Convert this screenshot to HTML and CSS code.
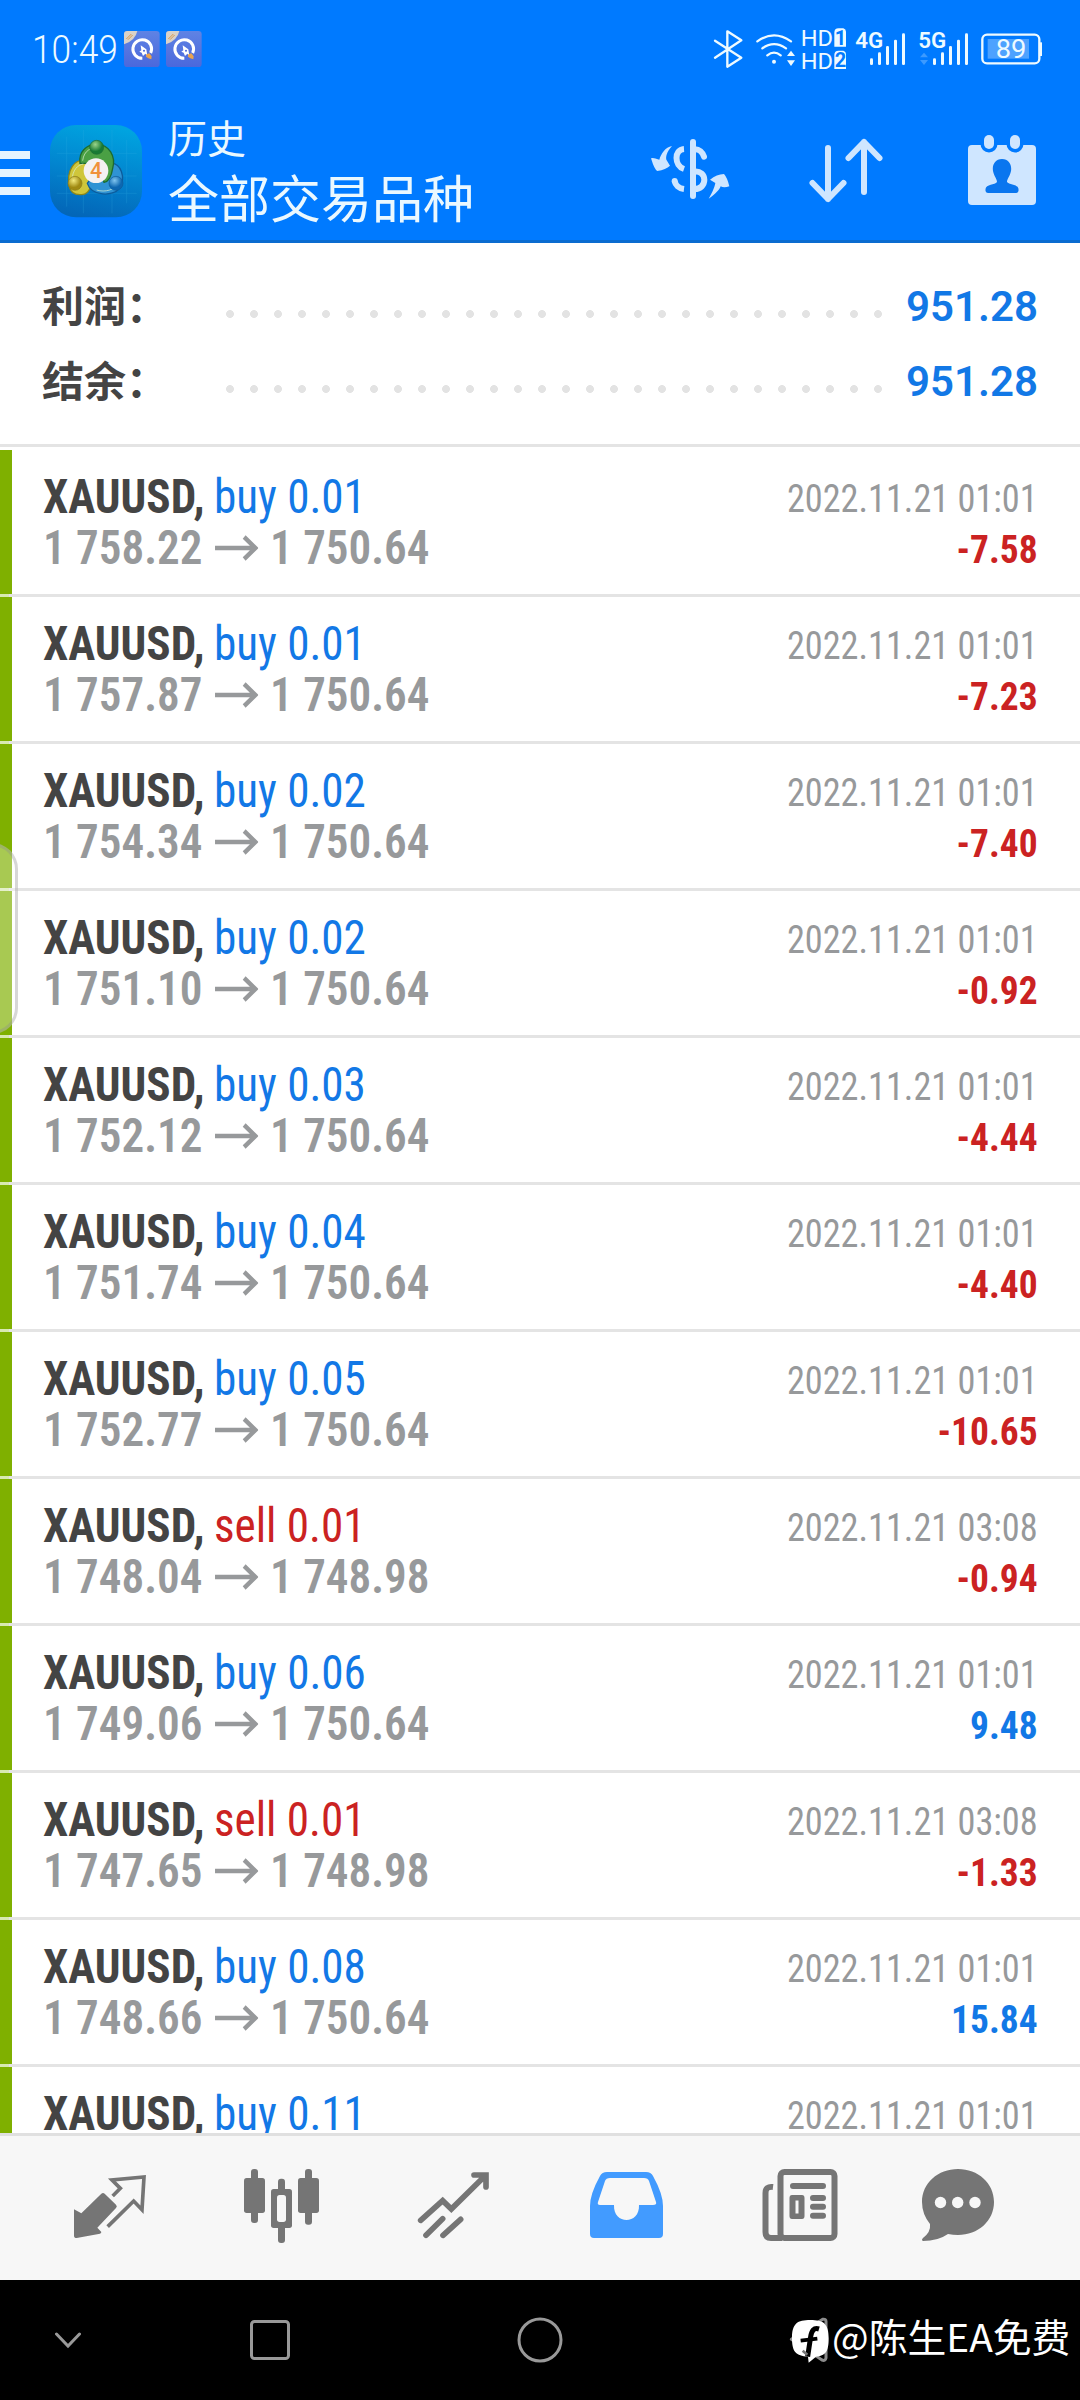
FILE: index.html
```html
<!DOCTYPE html>
<html lang="zh-CN">
<head>
<meta charset="utf-8">
<title>历史</title>
<link rel="stylesheet" href="styles.css">
</head>
<body>
<header class="header">
  <div class="status">
    <span class="clock">10:49</span>
    <svg class="app-chips" width="80" height="100" viewBox="0 0 240 300">
      <defs>
        <linearGradient id="chip" x1="0" y1="0" x2="0" y2="1"><stop offset="0" stop-color="#5f83e4"/><stop offset="1" stop-color="#4b68dc"/></linearGradient>
        <g id="notice">
          <rect x="0" y="93" width="107" height="108" rx="10" fill="url(#chip)"/>
          <path d="M0 133V103Q0 93 10 93H40Q34 122 0 133Z" fill="#d9d2c8"/>
          <path d="M7 117l15-15M12 119l14-14" stroke="#d99a4a" stroke-width="3"/>
          <path d="M55 175A28 28 0 1 1 80 159" fill="none" stroke="#fff" stroke-width="9"/>
          <path d="M50 136L67 148L70 167L64 161L57 168L53 158L46 155L52 151Z" fill="#fff"/>
          <circle cx="60" cy="152" r="3" fill="#4b68dc"/>
          <path d="M67 163l9-3 7 9-1 9-9-3-7-5Z" fill="#eaa44e"/>
        </g>
      </defs>
      <use href="#notice"/><use href="#notice" x="126"/>
    </svg>
    <svg class="indicators" width="360" height="60" viewBox="0 0 1080 180">
      <g fill="none" stroke="#eefaff" stroke-width="7" stroke-linecap="round" stroke-linejoin="round">
        <path d="M45 62L124 113L82 140V34L124 61L45 113"/>
        <path d="M172 64Q222 28 273 64M187 85Q222 60 258 85M202 106Q222 90 242 106"/>
        <rect x="847" y="44" width="171" height="86" rx="14"/>
      </g>
      <g fill="#eefaff">
        <circle cx="222" cy="125" r="6"/>
        <path d="M261 108H285L273 92ZM261 121H285L273 138Z"/>
        <path d="M403 38Q403 25 416 25H430Q438 27 438 35V80H403ZM403 105Q403 92 416 92H430Q438 94 438 102V147H403Z"/>
        <path d="M1018 67h8v41h-8z"/>
        <g><rect x="510" y="115" width="9" height="20" rx="4"/><rect x="534" y="97" width="9" height="38" rx="4"/><rect x="558" y="78" width="9" height="57" rx="4"/><rect x="582" y="59" width="9" height="76" rx="4"/><rect x="606" y="40" width="9" height="95" rx="4"/></g>
        <g><rect x="699" y="115" width="9" height="20" rx="4"/><rect x="723" y="97" width="9" height="38" rx="4"/><rect x="747" y="78" width="9" height="57" rx="4"/><rect x="771" y="59" width="9" height="76" rx="4"/><rect x="795" y="40" width="9" height="95" rx="4"/></g>
        <path d="M660 112H684L672 98ZM660 120H684L672 135Z" opacity=".25"/>
        <rect x="863" y="57" width="124" height="59" opacity=".32"/>
      </g>
      <g class="ind-text">
        <text x="302" y="79" font-size="68" textLength="97" lengthAdjust="spacingAndGlyphs">HD</text>
        <text x="302" y="146" font-size="68" textLength="97" lengthAdjust="spacingAndGlyphs">HD</text>
        <text class="net" x="466" y="83" font-size="66" textLength="84" lengthAdjust="spacingAndGlyphs">4G</text>
        <text class="net" x="655" y="83" font-size="66" textLength="84" lengthAdjust="spacingAndGlyphs">5G</text>
        <text x="887" y="115" font-size="80" textLength="92" lengthAdjust="spacingAndGlyphs">89</text>
        <text class="sim" x="404" y="75" font-size="60">1</text>
        <text class="sim" x="404" y="142" font-size="60">2</text>
      </g>
    </svg>
  </div>
  <div class="toolbar">
    <svg width="30" height="140" viewBox="0 100 30 140"><path d="M0 151H30V159H0ZM0 169H30V177H0ZM0 187H30V195H0Z" fill="#e6f4ff"/></svg>
    <svg class="logo" width="92" height="140" viewBox="60 240 276 420">
      <defs>
        <linearGradient id="tile" x1=".6" y1="0" x2=".4" y2="1"><stop offset="0" stop-color="#00a4e0"/><stop offset=".5" stop-color="#0285cf"/><stop offset="1" stop-color="#0366b8"/></linearGradient>
        <radialGradient id="gr" cx=".4" cy=".3"><stop offset="0" stop-color="#9bd48b"/><stop offset="1" stop-color="#187a33"/></radialGradient>
        <radialGradient id="ye" cx=".4" cy=".3"><stop offset="0" stop-color="#f3ea7c"/><stop offset="1" stop-color="#a08a12"/></radialGradient>
        <radialGradient id="bl" cx=".4" cy=".3"><stop offset="0" stop-color="#7fc4ee"/><stop offset="1" stop-color="#0d67b0"/></radialGradient>
      </defs>
      <rect x="60" y="315" width="276" height="277" rx="78" fill="url(#tile)"/>
      <path d="M110 350V560M160 330V580M246 330V580M290 360V550M80 400H320M80 520H320M80 468H320" stroke="#39b3e6" stroke-width="2" opacity=".3"/>
      <path d="M118 500C108 450 135 415 165 422C205 430 190 520 160 523C138 526 122 520 118 500Z" fill="#cfc63a" stroke="#8a861c" stroke-width="4"/>
      <path d="M172 490C185 530 250 530 268 505C290 470 270 430 245 430C215 440 190 460 172 490Z" fill="#2f93d4" stroke="#0c5c9c" stroke-width="4"/>
      <path d="M150 430C145 395 170 373 200 373C238 373 258 410 248 445C244 470 235 485 222 487L205 430Z" fill="#4aa044" stroke="#1c6b30" stroke-width="4"/>
      <path d="M158 422C162 390 185 382 205 382M126 480C128 450 142 435 160 432M200 510C225 518 255 510 266 488" fill="none" stroke="#d8f0d0" stroke-width="3" opacity=".7"/>
      <circle cx="200" cy="382" r="21" fill="url(#gr)" stroke="#1c6b30" stroke-width="2"/>
      <circle cx="135" cy="490" r="21" fill="url(#ye)" stroke="#8a7a1c" stroke-width="2"/>
      <circle cx="258" cy="490" r="21" fill="url(#bl)" stroke="#0c5c9c" stroke-width="2"/>
      <circle cx="198" cy="452" r="37" fill="#f4f1f2"/>
      <text class="logo-digit" x="198" y="475" text-anchor="middle" font-size="64">4</text>
    </svg>
    <div class="titles"><div class="sub">历史</div><div class="main">全部交易品种</div></div>
    <svg class="act-money" width="140" height="140" viewBox="0 -75 420 420">
      <g fill="none" stroke="#cfe6ff" stroke-width="18">
        <path d="M159 51V213" stroke-linecap="round"/>
        <path d="M132 72C102 74 102 122 132 132M104 168C106 180 116 190 132 192"/>
        <path d="M104 168V168M163 73C178 72 188 82 192 95" stroke-linecap="round"/>
        <path d="M160 140C204 132 204 196 160 192"/>
      </g>
      <path d="M96 63C80 80 76 98 80 106L90 122Q78 134 52 138Q44 136 33 100Q38 96 58 104C62 88 76 66 96 63Z" fill="#cfe6ff"/>
      <path d="M206 221C226 208 240 192 242 184Q252 190 268 184Q262 158 252 147Q230 148 210 164L226 174C224 188 214 208 206 221Z" fill="#cfe6ff"/>
    </svg>
    <svg class="act-sort" width="80" height="140" viewBox="806 100 80 140"><path d="M828 148V199M812.500 183L828 199L843.500 183M864 192V142M848.500 158L864 142L879.500 158" fill="none" stroke="#cfe6ff" stroke-width="6" stroke-linecap="round" stroke-linejoin="round"/></svg>
    <svg class="act-date" width="70" height="140" viewBox="967 100 70 140">
      <rect x="968" y="145" width="68" height="60" rx="4" fill="#cfe6ff"/>
      <rect x="984" y="135" width="10" height="14" rx="5" fill="#cfe6ff" stroke="#007aff" stroke-width="7" paint-order="stroke"/>
      <rect x="1010" y="135" width="10" height="14" rx="5" fill="#cfe6ff" stroke="#007aff" stroke-width="7" paint-order="stroke"/>
      <path d="M1002 159C1009 159 1012 165 1011 171C1010 176 1007 179 1007 182C1009 185 1018 184 1018.500 189V191Q1018 193 1016 193H988Q986 193 985.500 191V189C986 184 995 185 997 182C997 179 994 176 993 171C992 165 995 159 1002 159Z" fill="#0a76ef"/>
    </svg>
  </div>
</header>

<section class="summary">
  <div class="total"><span class="label">利润：</span><span class="dots"></span><span class="sum">951.28</span></div>
  <div class="total"><span class="label">结余：</span><span class="dots"></span><span class="sum">951.28</span></div>
</section>

<main class="deals" id="deals"></main>

<nav class="tabs">
  <svg class="t1" width="100" height="144" viewBox="0 -72 300 432">
    <path d="M42 148L64 160L124 101Q129 97 134 101L168 134Q173 139 168 144L112 203L124 216Q124 220 120 221L50 234Q42 234 42 227Z" fill="#757575"/>
    <path d="M158 108L181 85L156 60L252 51L246 149L221 123L143 200" fill="none" stroke="#757575" stroke-width="11"/>
  </svg>
  <svg class="t2" width="90" height="144" viewBox="540 -72 270 432" fill="#757575">
    <rect x="552" y="54" width="63" height="105" rx="8"/><rect x="573" y="27" width="21" height="162" rx="9"/>
    <rect x="714" y="54" width="63" height="105" rx="8"/><rect x="735" y="27" width="21" height="167" rx="9"/>
    <rect x="654" y="56" width="21" height="193" rx="9"/><rect x="633" y="87" width="63" height="117" rx="8"/><rect x="651" y="105" width="27" height="81" rx="8" fill="#f7f7f7"/>
  </svg>
  <svg class="t3" width="90" height="144" viewBox="1050 -72 270 432">
    <path d="M1082 181L1148 122L1174 147L1277 46M1242 45H1278V81" fill="none" stroke="#757575" stroke-width="17" stroke-linecap="round" stroke-linejoin="miter"/>
    <path d="M1098 226L1148 176M1149 226L1202 178" fill="none" stroke="#757575" stroke-width="17" stroke-linecap="round"/>
  </svg>
  <svg class="t4" width="74" height="144" viewBox="590 2136 74 144"><path fill-rule="evenodd" d="M607 2172H646Q651 2172 653 2176Q663 2194 663 2206V2234Q663 2238 659 2238H594Q590 2238 590 2234V2206Q590 2194 600 2176Q602 2172 607 2172ZM610 2178Q606 2178 605 2181L598 2202Q597 2205 600 2205H614C613 2225 640 2225 639 2205H653Q657 2205 656 2202L649 2181Q648 2178 644 2178Z" fill="#429bff"/></svg>
  <svg class="t5" width="76" height="144" viewBox="762 2136 76 144">
    <g fill="none" stroke="#757575" stroke-width="6"><rect x="780.500" y="2172" width="54" height="66" rx="4"/><path d="M773 2187Q765.500 2186 765.500 2193V2232Q765.500 2238 771 2238H782"/><path d="M793 2186H823M813 2198H823M813 2206.700H823M813 2215.700H823" stroke-linecap="round"/></g>
    <path fill-rule="evenodd" d="M792 2195H802Q804.500 2195 804.500 2198V2216Q804.500 2219 802 2219H792Q789.500 2219 789.500 2216V2198Q789.500 2195 792 2195ZM795.500 2200.500V2213.500H798.500V2200.500Z" fill="#757575"/>
  </svg>
  <svg class="t6" width="74" height="144" viewBox="921 2136 74 144"><path d="M958 2169C978 2169 994 2183 994 2202C994 2221 978 2235 958 2235Q953 2235 948 2234Q938 2241 923 2241Q921 2240 923 2238Q931 2232 930 2224Q922 2214 922 2202C922 2183 938 2169 958 2169Z" fill="#757575"/><g fill="#f7f7f7"><circle cx="940.500" cy="2202.500" r="5.700"/><circle cx="957.700" cy="2202.500" r="5.700"/><circle cx="975" cy="2202.500" r="5.700"/></g></svg>
</nav>

<footer class="sysbar">
  <svg class="k1" width="26" height="120" viewBox="55 2280 26 120"><path d="M56.500 2334L68 2346L79.500 2334" fill="none" stroke="#999" stroke-width="3" stroke-linecap="round"/></svg>
  <svg class="k2" width="40" height="120" viewBox="250 2280 40 120"><rect x="251.500" y="2321.500" width="37" height="37" rx="3" fill="none" stroke="#999" stroke-width="3"/></svg>
  <svg class="k3" width="46" height="120" viewBox="517 2280 46 120"><circle cx="540" cy="2340" r="21" fill="none" stroke="#999" stroke-width="3"/></svg>
  <svg class="k4" width="42" height="120" viewBox="24 -90 126 360">
    <path d="M34 88L128 28Q138 26 138 34V144Q136 154 126 150Z" fill="none" stroke="#8c8c8c" stroke-width="9" stroke-linejoin="round"/>
    <path d="M91 30C130 30 146 40 146 85C146 126 136 138 108 140L86 158L84 140C48 138 36 126 36 85C36 40 52 30 91 30Z" fill="#fff"/>
    <path d="M117 57C101 52 95 62 92 80L83 140" fill="none" stroke="#000" stroke-width="15"/>
    <path d="M62 92L112 86" fill="none" stroke="#000" stroke-width="11"/>
    <path d="M68 122L82 134" fill="none" stroke="#777" stroke-width="8"/>
  </svg>
  <span class="mark">@陈生EA免费</span>
</footer>
<div class="handle"></div>
<script src="app.js"></script>
</body>
</html>
```
FILE: styles.css
```css
* { box-sizing: border-box; }
body {
  margin: 0;
  width: 1080px;
  height: 2400px;
  overflow: hidden;
  position: relative;
  display: flex;
  flex-direction: column;
  background: #fff;
  font-family: Roboto, "Noto Sans CJK SC", sans-serif;
}
svg { display: block; flex: none; }
.header { height: 243px; flex: none; background: #007aff; border-bottom: 3px solid #0a6cd0; }
.status { height: 100px; display: flex; color: #eefaff; }
.clock { width: 92px; margin-left: 32px; line-height: 101px; font-size: 38px; font-weight: 350; font-family: Roboto, sans-serif; white-space: nowrap; transform: scaleX(.93); transform-origin: left; }
.indicators { margin: 20px 20px 0 auto; }
.ind-text text { fill: #eefaff; font-family: Roboto, sans-serif; }
.ind-text .net { font-weight: 600; }
.ind-text .sim { fill: #007aff; font-weight: 700; }
.toolbar { height: 140px; display: flex; }
.logo { margin-left: 20px; }
.logo-digit { fill: #f0913c; font-family: Roboto, sans-serif; font-weight: 500; }
.titles { margin-left: 26px; width: 340px; padding-top: 9px; color: #eaf8ff; font-family: "Noto Sans CJK SC", sans-serif; font-weight: 400; white-space: nowrap; }
.sub { font-size: 39px; line-height: 54px; }
.main { font-size: 51px; line-height: 66px; }
.act-money { margin-left: 132px; }
.act-sort { margin-left: 26px; }
.act-date { margin-left: 81px; }

.summary { height: 201px; flex: none; padding: 26px 42px 0; }
.total { height: 75px; display: flex; align-items: center; }
.label { width: 180px; padding-bottom: 5px; font: 700 42px/70px "Noto Sans CJK SC", sans-serif; color: #444; white-space: nowrap; }
.dots { width: 672px; height: 8px; margin-left: 4px; margin-top: 14px; background: radial-gradient(circle at 4px 4px, #e3e3e3 3.600px, transparent 4.200px) 0 0 / 24px 8px repeat-x; }
.sum { margin-left: auto; font-size: 42px; font-weight: 650; color: #1278e6; }

.deals { height: 1689px; flex: none; overflow: hidden; border-top: 3px solid #e4e4e4; padding-top: 3px; }
.deal {
  height: 147px;
  display: flex;
  justify-content: space-between;
  padding: 21px 42px 0 43px;
  font-stretch: 75%;
  white-space: nowrap;
  border-bottom: 3px solid;
  border-image: linear-gradient(to right, #d8e9b0 12px, #e4e4e4 12px) 3;
  background: linear-gradient(#7fb000, #7fb000) 0 0 / 12px 100% no-repeat;
}
.left { font-size: 48px; line-height: 51px; transform: scaleX(.94); transform-origin: left; }
.name { color: #444; display: flex; }
.name b { font-weight: 700; }
.buy { color: #1278e6; }
.sell { color: #cb2222; }
.name .kind { margin-left: 10px; }
.prices { display: flex; align-items: center; color: #97999b; font-weight: 650; }
.arrow { margin: 0 13px; }
.right { padding-top: 3px; text-align: right; font-size: 39px; line-height: 51px; }
.time { color: #97999b; transform: scaleX(.93); transform-origin: right; }
.gain { font-weight: 700; transform: scaleX(.96); transform-origin: right; }

.tabs { height: 147px; flex: none; display: flex; background: #f7f7f7; border-top: 3px solid #e0e0e0; }
.t1 { margin-left: 60px; } .t2 { margin-left: 80px; } .t3 { margin-left: 80px; }
.t4 { margin-left: 90px; } .t5 { margin-left: 98px; } .t6 { margin-left: 83px; }
.sysbar { height: 120px; flex: none; display: flex; background: #000; }
.k1 { margin-left: 55px; } .k2 { margin-left: 169px; } .k3 { margin-left: 227px; } .k4 { margin-left: 225px; }
.mark { margin-left: 2px; color: #fff; font: 400 38.800px/110px "Noto Sans CJK SC", sans-serif; white-space: nowrap; }
.handle { position: absolute; left: -34px; top: 843px; width: 52px; height: 191px; border: 3px solid rgba(140,140,140,.35); border-radius: 28px; background: rgba(255,255,255,.32); }
```
FILE: app.js
```js
const deals = [
  ["buy 0.01", "01:01", "1 758.22", "1 750.64", "-7.58"],
  ["buy 0.01", "01:01", "1 757.87", "1 750.64", "-7.23"],
  ["buy 0.02", "01:01", "1 754.34", "1 750.64", "-7.40"],
  ["buy 0.02", "01:01", "1 751.10", "1 750.64", "-0.92"],
  ["buy 0.03", "01:01", "1 752.12", "1 750.64", "-4.44"],
  ["buy 0.04", "01:01", "1 751.74", "1 750.64", "-4.40"],
  ["buy 0.05", "01:01", "1 752.77", "1 750.64", "-10.65"],
  ["sell 0.01", "03:08", "1 748.04", "1 748.98", "-0.94"],
  ["buy 0.06", "01:01", "1 749.06", "1 750.64", "9.48"],
  ["sell 0.01", "03:08", "1 747.65", "1 748.98", "-1.33"],
  ["buy 0.08", "01:01", "1 748.66", "1 750.64", "15.84"],
  ["buy 0.11", "01:01"],
];
const arrow = '<svg class="arrow" width="46" height="26" viewBox="0 0 46 26"><path d="M0 13H43M31 2L43 13L31 24" fill="none" stroke="#97999b" stroke-width="4.500"/></svg>';
document.getElementById("deals").innerHTML = deals.map(([kind, time, from, to, gain]) => `
  <div class="deal">
    <div class="left">
      <div class="name"><b>XAUUSD,</b><span class="kind ${kind.split(" ")[0]}">${kind}</span></div>
      ${from ? `<div class="prices"><span>${from}</span>${arrow}<span>${to}</span></div>` : ""}
    </div>
    <div class="right">
      <div class="time">2022.11.21 ${time}</div>
      ${gain ? `<div class="gain ${gain[0] === "-" ? "sell" : "buy"}">${gain}</div>` : ""}
    </div>
  </div>`).join("");
```
